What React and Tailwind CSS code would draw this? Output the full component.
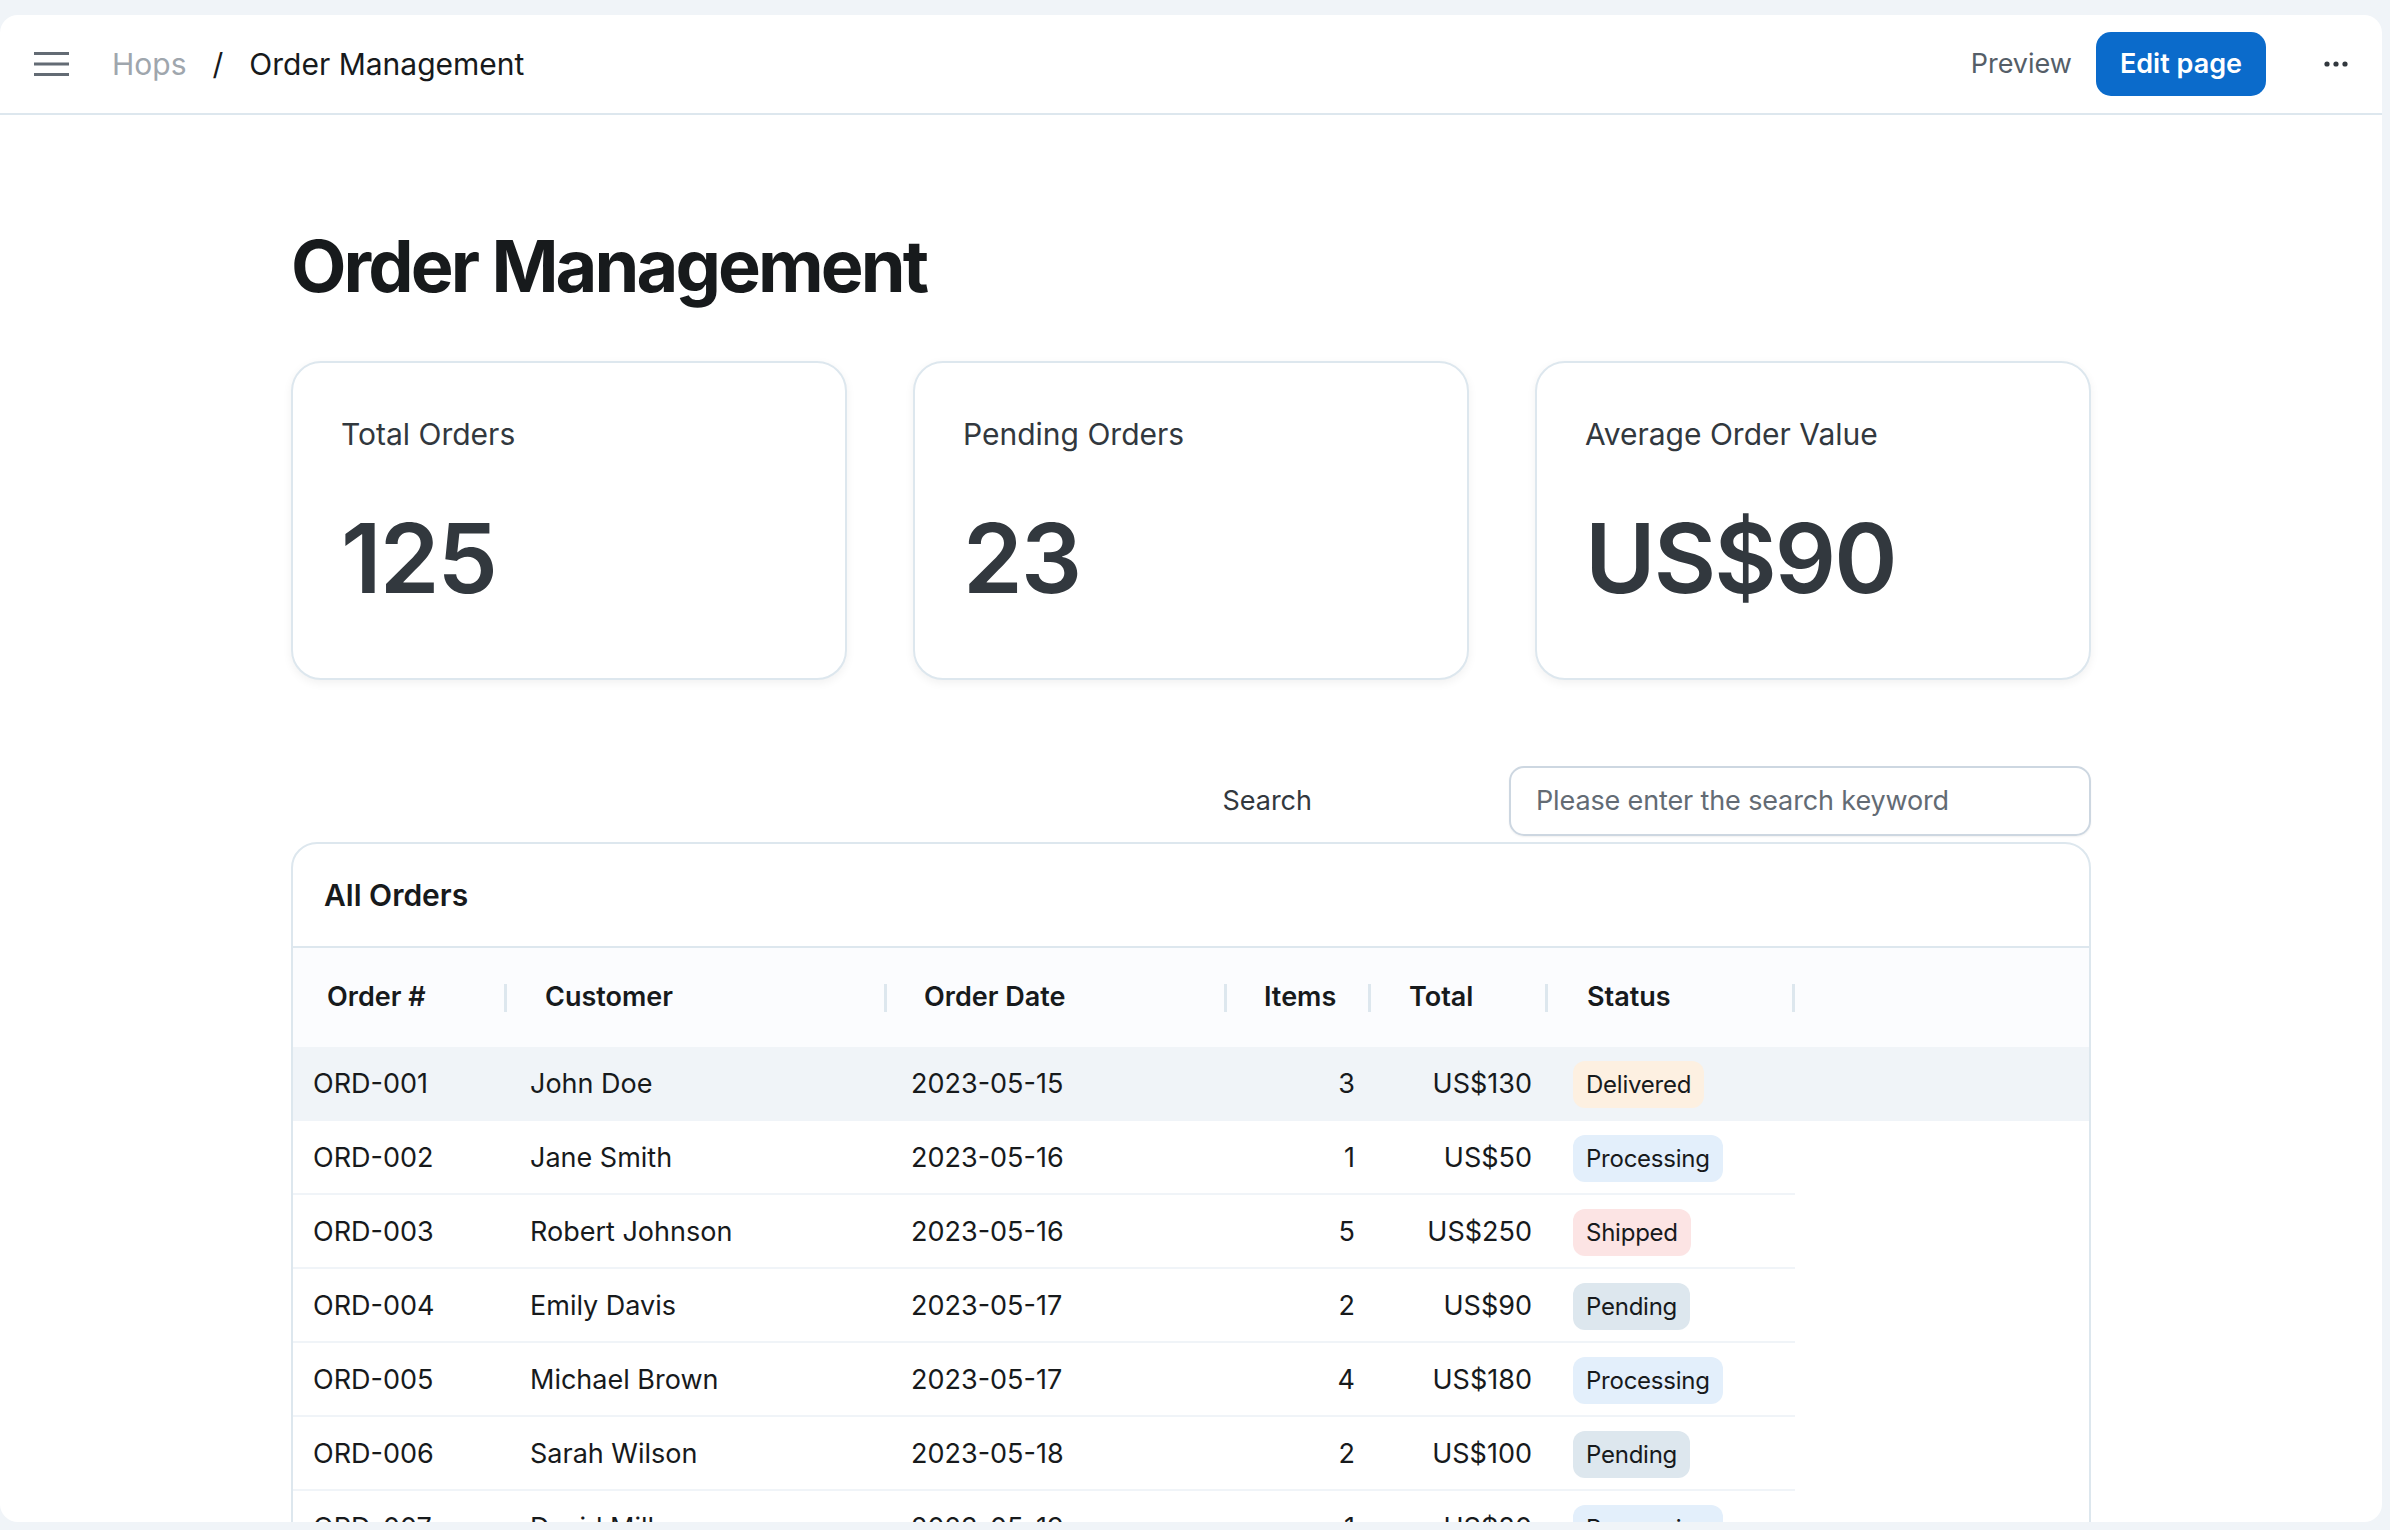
import React from 'react';

const stats = [
    { label: 'Total Orders', value: '125' },
    { label: 'Pending Orders', value: '23' },
    { label: 'Average Order Value', value: 'US$90' },
];

const orders = [
    { id: 'ORD-001', customer: 'John Doe', date: '2023-05-15', items: 3, total: 'US$130', status: 'Delivered' },
    { id: 'ORD-002', customer: 'Jane Smith', date: '2023-05-16', items: 1, total: 'US$50', status: 'Processing' },
    { id: 'ORD-003', customer: 'Robert Johnson', date: '2023-05-16', items: 5, total: 'US$250', status: 'Shipped' },
    { id: 'ORD-004', customer: 'Emily Davis', date: '2023-05-17', items: 2, total: 'US$90', status: 'Pending' },
    { id: 'ORD-005', customer: 'Michael Brown', date: '2023-05-17', items: 4, total: 'US$180', status: 'Processing' },
    { id: 'ORD-006', customer: 'Sarah Wilson', date: '2023-05-18', items: 2, total: 'US$100', status: 'Pending' },
    { id: 'ORD-007', customer: 'David Miller', date: '2023-05-19', items: 1, total: 'US$80', status: 'Processing' },
];

const statusStyles = {
    Delivered: 'bg-[#fdf0e1]',
    Processing: 'bg-[#e3effb]',
    Shipped: 'bg-[#fce4e4]',
    Pending: 'bg-[#dde7ee]',
};

const cols = 'grid grid-cols-[214px_380px_340px_144px_177px_247px] w-[1502px]';

function HeaderCell({ children, pl }) {
    return (
        <div className={`relative flex items-center h-full ${pl}`}>
            {children}
            <span className="absolute right-0 top-1/2 -translate-y-1/2 w-[3px] h-[28px] bg-[#dde7ee]" />
        </div>
    );
}

export default function App() {
    return (
        <div className="h-screen bg-[#f0f4f8] pt-[15px] pr-[8px] pb-[8px] font-['Inter','Noto_Sans',sans-serif] overflow-hidden">
            <div className="h-full bg-white rounded-[18px] flex flex-col overflow-hidden">
                {/* Top bar */}
                <div className="h-[100px] shrink-0 border-b-2 border-[#dde7ee] flex items-center pl-[34px] pr-[34px]">
                    <svg width="35" height="24" viewBox="0 0 35 24" className="shrink-0">
                        <rect x="0" y="0" width="35" height="3" fill="#636b74" />
                        <rect x="0" y="10.5" width="35" height="3" fill="#636b74" />
                        <rect x="0" y="21" width="35" height="3" fill="#636b74" />
                    </svg>
                    <div className="flex items-center ml-[43px] text-[30px]">
                        <span className="text-[#9fa6ad]">Hops</span>
                        <span className="mx-[26px] text-[#171a1c]">/</span>
                        <span className="text-[#171a1c]">Order Management</span>
                    </div>
                    <div className="ml-auto flex items-center">
                        <span className="text-[27px] text-[#555e68]">Preview</span>
                        <button className="ml-[24px] h-[64px] px-[24px] rounded-[15px] bg-[#0b6bcb] text-white text-[27px] font-semibold">
                            Edit page
                        </button>
                        <svg width="24" height="6" viewBox="0 0 24 6" className="ml-[58px]">
                            <circle cx="3" cy="3" r="2.6" fill="#32383e" />
                            <circle cx="12" cy="3" r="2.6" fill="#32383e" />
                            <circle cx="21" cy="3" r="2.6" fill="#32383e" />
                        </svg>
                    </div>
                </div>

                {/* Content */}
                <div className="flex-1 overflow-hidden">
                    <div className="w-[1800px] mx-auto pt-[108px]">
                        <h1 className="text-[72px] leading-[86px] font-bold text-[#171a1c] tracking-[-0.04em]">
                            Order Management
                        </h1>

                        <div className="grid grid-cols-3 gap-[66px] mt-[52px]">
                            {stats.map((s) => (
                                <div
                                    key={s.label}
                                    className="h-[319px] rounded-[30px] border-2 border-[#dde7ee] bg-white shadow-[0_3px_10px_rgba(21,21,21,0.06)] pl-[48px] pt-[49px]"
                                >
                                    <p className="text-[30px] leading-[45px] text-[#32383e]">{s.label}</p>
                                    <p className="mt-[53px] text-[96px] leading-[96px] font-semibold text-[#32383e] tracking-[-0.02em]">
                                        {s.value}
                                    </p>
                                </div>
                            ))}
                        </div>

                        {/* Search */}
                        <div className="flex items-center justify-end mt-[86px]">
                            <span className="text-[27px] text-[#32383e]">Search</span>
                            <div className="ml-[197px] w-[582px] h-[70px] rounded-[15px] border-2 border-[#cdd7e1] flex items-center pl-[25px] shadow-[0_1px_2px_rgba(21,21,21,0.06)]">
                                <span className="text-[27px] tracking-[-0.005em] text-[#636b74]">Please enter the search keyword</span>
                            </div>
                        </div>

                        {/* Orders table */}
                        <div className="mt-[6px] rounded-[26px] border-2 border-[#dde7ee] bg-white overflow-hidden">
                            <div className="h-[102px] flex items-center pl-[31px] text-[30px] font-semibold text-[#171a1c]">
                                All Orders
                            </div>
                            <div className="border-t-2 border-[#dde7ee] bg-[#fbfcfe] h-[101px]">
                                <div className={`${cols} h-full text-[27px] font-semibold text-[#171a1c]`}>
                                    <HeaderCell pl="pl-[34px]">Order #</HeaderCell>
                                    <HeaderCell pl="pl-[38px]">Customer</HeaderCell>
                                    <HeaderCell pl="pl-[37px]">Order Date</HeaderCell>
                                    <HeaderCell pl="pl-[37px]">Items</HeaderCell>
                                    <HeaderCell pl="pl-[38px]">Total</HeaderCell>
                                    <HeaderCell pl="pl-[39px]">Status</HeaderCell>
                                </div>
                            </div>
                            {orders.map((o, i) => (
                                <div key={o.id} className={i === 0 ? 'bg-[#f0f4f8]' : 'bg-white'}>
                                    <div className={`${cols} h-[74px] pt-[3px] items-center text-[27px] text-[#171a1c] border-b-2 ${i === 0 ? 'border-transparent' : 'border-[#f0f4f8]'}`}>
                                        <div className="pl-[20px]">{o.id}</div>
                                        <div className="pl-[23px]">{o.customer}</div>
                                        <div className="pl-[24px]">{o.date}</div>
                                        <div className="pr-[16px] text-right">{o.items}</div>
                                        <div className="pr-[16px] text-right">{o.total}</div>
                                        <div className="pl-[25px]">
                                            <span className={`inline-flex items-center h-[47px] px-[13px] rounded-[12px] text-[24px] tracking-[-0.01em] ${statusStyles[o.status]}`}>
                                                {o.status}
                                            </span>
                                        </div>
                                    </div>
                                </div>
                            ))}
                        </div>
                    </div>
                </div>
            </div>
        </div>
    );
}
